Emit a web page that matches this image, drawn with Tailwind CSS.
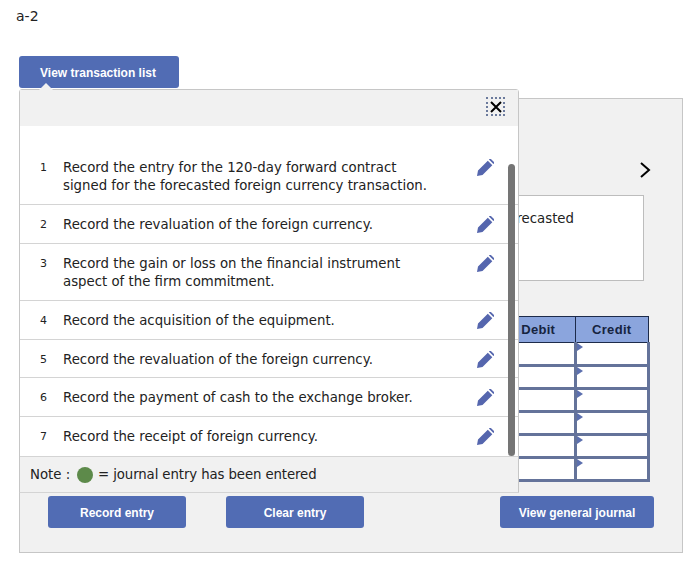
<!DOCTYPE html>
<html lang="en">
<head>
  <meta charset="UTF-8">
  <title>Journal entry worksheet</title>
  <script src="https://cdn.jsdelivr.net/npm/@tailwindcss/browser@4"></script>
</head>
<body class="bg-white font-['DejaVu_Sans',sans-serif] text-[13.3px] text-[#222]">
  <div class="relative h-[575px] w-[696px] overflow-hidden">
    <p class="pl-4 pt-[7px] text-[14px] leading-[18px]">a-2</p>

    <button class="ml-[19px] mt-[31px] block h-8 w-40 rounded-[3px] bg-[#516cb4] pr-[2px] pt-[2px] font-['Liberation_Sans',sans-serif] text-[12px] font-bold text-white">View transaction list</button>

    <!-- worksheet behind the popup -->
    <div class="ml-[19px] mt-[10px] h-[455px] w-[664px] border border-[#c6c6c6] bg-[#f1f1f1] pl-7">
      <div class="flex h-24 justify-end pr-[31px] pt-[63px]">
        <svg class="h-4 w-3" viewBox="0 0 12 16" fill="none" stroke="#000" stroke-width="2"><path d="M2 1l8 7-8 7"/></svg>
      </div>
      <div class="h-[86px] w-[596px] border border-[#bdbdbd] bg-white pt-[14px] leading-[18px]">
        <p class="whitespace-nowrap pr-[69px] text-right">signed for the forecasted</p>
      </div>
      <table class="ml-[452px] mt-[35px] w-[150px] table-fixed border-collapse font-['Liberation_Sans',sans-serif]">
        <thead>
          <tr class="h-[26px] bg-[#8ba5dd] text-[13px] font-bold tracking-[0.3px] text-[#16243f]">
            <th class="border border-[#1d2b4a] font-bold">Debit</th>
            <th class="border border-[#1d2b4a] font-bold">Credit</th>
          </tr>
        </thead>
        <tbody>
          <tr class="h-[23px] bg-white"><td class="border-[3px] border-t-0 border-[#64739a]"></td><td class="relative border-[3px] border-t-0 border-[#64739a]"><span class="absolute left-0 top-0 border-y-[4px] border-l-[6px] border-y-transparent border-l-[#5b6fae]"></span></td></tr>
          <tr class="h-[23px] bg-white"><td class="border-[3px] border-[#64739a]"></td><td class="relative border-[3px] border-[#64739a]"><span class="absolute left-0 top-0 border-y-[4px] border-l-[6px] border-y-transparent border-l-[#5b6fae]"></span></td></tr>
          <tr class="h-[23px] bg-white"><td class="border-[3px] border-[#64739a]"></td><td class="relative border-[3px] border-[#64739a]"><span class="absolute left-0 top-0 border-y-[4px] border-l-[6px] border-y-transparent border-l-[#5b6fae]"></span></td></tr>
          <tr class="h-[23px] bg-white"><td class="border-[3px] border-[#64739a]"></td><td class="relative border-[3px] border-[#64739a]"><span class="absolute left-0 top-0 border-y-[4px] border-l-[6px] border-y-transparent border-l-[#5b6fae]"></span></td></tr>
          <tr class="h-[23px] bg-white"><td class="border-[3px] border-[#64739a]"></td><td class="relative border-[3px] border-[#64739a]"><span class="absolute left-0 top-0 border-y-[4px] border-l-[6px] border-y-transparent border-l-[#5b6fae]"></span></td></tr>
          <tr class="h-[23px] bg-white"><td class="border-[3px] border-[#64739a]"></td><td class="relative border-[3px] border-[#64739a]"><span class="absolute left-0 top-0 border-y-[4px] border-l-[6px] border-y-transparent border-l-[#5b6fae]"></span></td></tr>
        </tbody>
      </table>
    </div>

    <div class="absolute left-[48px] top-[496px] flex gap-10 font-['Liberation_Sans',sans-serif] text-[12px] font-bold text-white">
      <button class="h-8 w-[138px] rounded-[3px] bg-[#516cb4] pt-[2px]">Record entry</button>
      <button class="h-8 w-[138px] rounded-[3px] bg-[#516cb4] pt-[2px]">Clear entry</button>
    </div>
    <button class="absolute left-[500px] top-[496px] h-8 w-[154px] rounded-[3px] bg-[#516cb4] pt-[2px] font-['Liberation_Sans',sans-serif] text-[12px] font-bold text-white">View general journal</button>

    <!-- transaction list popup -->
    <div class="absolute left-[19px] top-[89px] h-[404px] w-[500px] rounded-t-[3px] border border-[#c6c6c6] bg-white">
      <span class="absolute -top-[7px] left-[19px] h-0 w-0 border-x-[7px] border-b-[7px] border-x-transparent border-b-[#f1f1f1]"></span>
      <div class="flex h-9 items-start justify-end bg-[#f1f1f1] pr-[13px] pt-[7px]">
        <button class="flex h-[19px] w-[19px] items-center justify-center border-2 border-dotted border-[#6b7a9c]">
          <svg class="h-3 w-3" viewBox="0 0 12 12" stroke="#000" stroke-width="2"><path d="M1 1l10 10M11 1L1 11"/></svg>
        </button>
      </div>
      <ul class="pt-[22px] leading-[18px]">
        <li class="flex h-[57px] border-b border-[#d4d4d4] pt-[11px]">
          <span class="w-[43px] pl-5 text-[11px]">1</span>
          <span class="w-[414px]">Record the entry for the 120-day forward contract<br>signed for the forecasted foreign currency transaction.</span>
          <svg class="h-[17px] w-[17px]" viewBox="0 0 17 17" fill="#5566ae"><path d="M0 17l1-5.500L10.800 1.700 15.300 6.200 5.500 16zM11.900.600L12.500 0a1 1 0 0 1 1.400 0l3.100 3.100a1 1 0 0 1 0 1.400l-.6.600z"/></svg>
        </li>
        <li class="flex h-[39px] border-b border-[#d4d4d4] pt-[11px]">
          <span class="w-[43px] pl-5 text-[11px]">2</span>
          <span class="w-[414px]">Record the revaluation of the foreign currency.</span>
          <svg class="h-[17px] w-[17px]" viewBox="0 0 17 17" fill="#5566ae"><path d="M0 17l1-5.500L10.800 1.700 15.300 6.200 5.500 16zM11.900.600L12.500 0a1 1 0 0 1 1.400 0l3.100 3.100a1 1 0 0 1 0 1.400l-.6.600z"/></svg>
        </li>
        <li class="flex h-[57px] border-b border-[#d4d4d4] pt-[11px]">
          <span class="w-[43px] pl-5 text-[11px]">3</span>
          <span class="w-[414px]">Record the gain or loss on the financial instrument<br>aspect of the firm commitment.</span>
          <svg class="h-[17px] w-[17px]" viewBox="0 0 17 17" fill="#5566ae"><path d="M0 17l1-5.500L10.800 1.700 15.300 6.200 5.500 16zM11.900.600L12.500 0a1 1 0 0 1 1.400 0l3.100 3.100a1 1 0 0 1 0 1.400l-.6.600z"/></svg>
        </li>
        <li class="flex h-[39px] border-b border-[#d4d4d4] pt-[11px]">
          <span class="w-[43px] pl-5 text-[11px]">4</span>
          <span class="w-[414px]">Record the acquisition of the equipment.</span>
          <svg class="h-[17px] w-[17px]" viewBox="0 0 17 17" fill="#5566ae"><path d="M0 17l1-5.500L10.800 1.700 15.300 6.200 5.500 16zM11.900.600L12.500 0a1 1 0 0 1 1.400 0l3.100 3.100a1 1 0 0 1 0 1.400l-.6.600z"/></svg>
        </li>
        <li class="flex h-[38px] border-b border-[#d4d4d4] pt-[11px]">
          <span class="w-[43px] pl-5 text-[11px]">5</span>
          <span class="w-[414px]">Record the revaluation of the foreign currency.</span>
          <svg class="h-[17px] w-[17px]" viewBox="0 0 17 17" fill="#5566ae"><path d="M0 17l1-5.500L10.800 1.700 15.300 6.200 5.500 16zM11.900.600L12.500 0a1 1 0 0 1 1.400 0l3.100 3.100a1 1 0 0 1 0 1.400l-.6.600z"/></svg>
        </li>
        <li class="flex h-[39px] border-b border-[#d4d4d4] pt-[11px]">
          <span class="w-[43px] pl-5 text-[11px]">6</span>
          <span class="w-[414px]">Record the payment of cash to the exchange broker.</span>
          <svg class="h-[17px] w-[17px]" viewBox="0 0 17 17" fill="#5566ae"><path d="M0 17l1-5.500L10.800 1.700 15.300 6.200 5.500 16zM11.900.600L12.500 0a1 1 0 0 1 1.400 0l3.100 3.100a1 1 0 0 1 0 1.400l-.6.600z"/></svg>
        </li>
        <li class="flex h-[39px] pt-[11px]">
          <span class="w-[43px] pl-5 text-[11px]">7</span>
          <span class="w-[414px]">Record the receipt of foreign currency.</span>
          <svg class="h-[17px] w-[17px]" viewBox="0 0 17 17" fill="#5566ae"><path d="M0 17l1-5.500L10.800 1.700 15.300 6.200 5.500 16zM11.900.600L12.500 0a1 1 0 0 1 1.400 0l3.100 3.100a1 1 0 0 1 0 1.400l-.6.600z"/></svg>
        </li>
      </ul>
      <div class="flex h-[37px] items-center border-y border-[#d4d4d4] bg-[#f1f1f1] pl-[10px]">
        <span class="w-[47px]">Note :</span>
        <span class="h-4 w-4 rounded-full bg-[#5d8a4a]"></span>
        <span class="ml-[5px] tracking-[-0.1px]">= journal entry has been entered</span>
      </div>
      <div class="absolute right-[3px] top-[74px] h-[292px] w-[7px] rounded-full bg-[#757575]"></div>
    </div>
  </div>
</body>
</html>
